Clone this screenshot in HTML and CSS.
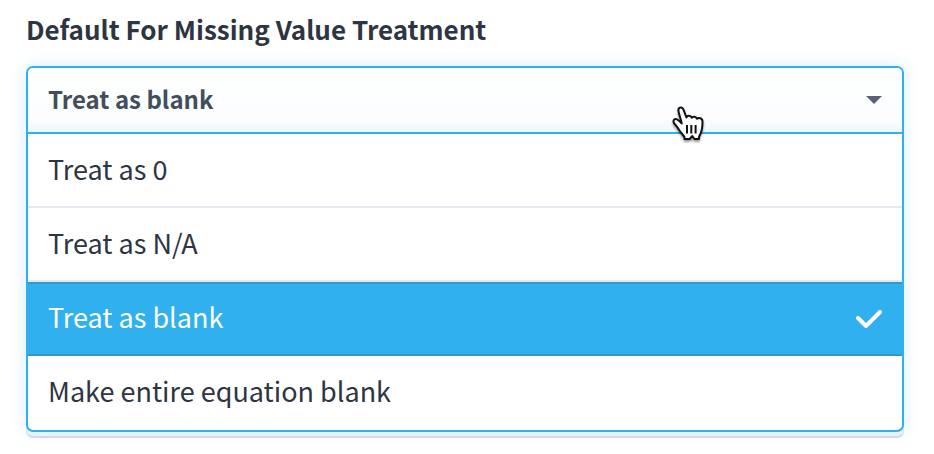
FILE: index.html
```
<!DOCTYPE html>
<html lang="en">
<head>
    <meta charset="UTF-8">
    <meta name="viewport" content="width=device-width, initial-scale=1.0">
    <title>Missing Value Treatment</title>
    <link rel="stylesheet" href="styles.css">
</head>
<body>

    <div class="field">
        <label class="field-label" for="missingValue">Default For Missing Value Treatment</label>

        <div class="dropdown">
            <!-- Closed control -->
            <div class="dropdown-control">
                <select id="missingValue" class="dropdown-select">
                    <option>Treat as 0</option>
                    <option>Treat as N/A</option>
                    <option selected>Treat as blank</option>
                    <option>Make entire equation blank</option>
                </select>
                <svg class="caret" viewBox="0 0 16 8" aria-hidden="true"><path d="M0 0h16L8 8z"/></svg>

                <!-- Hand pointer -->
                <svg class="pointer" viewBox="0 0 40 42" aria-hidden="true">
                    <path d="M14.500 36v-2c-1.500-2.300-3.700-4.200-5-6.500-1.400-2.300-2.800-4.600-4.800-6.500-1.600-1.700-1.700-4 .1-4.800 2.200-.9 4.300 1.400 6.900 4.200-.8-4.500-2.600-8.500-3.200-12.300-.6-4.100 3.800-5 5.100-1.300l2.800 7.700c.6-2.300 4.500-2.300 5.300.3.900-1.700 4.700-1.500 5.300 1 1.500-1.500 5.500-.7 5.500 2.700 0 4.500-.5 8.500-1.700 11.500-.9 2.200-1.800 2.700-1.800 4.500v1.500h-4.500l-2.200-3-2.600 3z"/>
                    <path class="pointer-lines" d="M17 22v8.500M21.300 22v8.500M25.600 22v8.500"/>
                </svg>
            </div>

            <!-- Open menu -->
            <div class="dropdown-menu">
                <button type="button" class="dropdown-item">Treat as 0</button>
                <button type="button" class="dropdown-item">Treat as N/A</button>
                <button type="button" class="dropdown-item selected">
                    Treat as blank
                    <svg class="check" viewBox="0 0 26 18" aria-hidden="true"><path d="M2 8l8 8L24 2"/></svg>
                </button>
                <button type="button" class="dropdown-item">Make entire equation blank</button>
            </div>
        </div>
    </div>

</body>
</html>
```

FILE: styles.css
```
body {
    font-family: "Noto Sans CJK SC", "Noto Sans", sans-serif;
    margin: 0;
    background: #fff;
    color: #2d3542;
}

.field {
    padding: 10px 30px 16px 26px;
}

.field-label {
    display: block;
    margin-bottom: 18px;
    font-size: 26px;
    font-weight: 700;
    line-height: 38px;
}

/* Frame around the control and its menu */
.dropdown {
    border: 2px solid #30b0ee;
    border-radius: 7px;
    background: #fff;
    box-shadow: 0 4px 0 #e9f1f9, 0 6px 0 #d0dbe5, 0 0 16px rgba(48, 176, 238, 0.2);
}

.dropdown-control {
    position: relative;
    display: flex;
    align-items: center;
    height: 64px;
    border-bottom: 2px solid #30b0ee;
    border-radius: 5px 5px 0 0;
    background: linear-gradient(#fff, #fbfdfe 80%, #edf6fd);
}

.dropdown-select {
    flex: 1;
    height: 64px;
    padding: 0 20px 4px;
    border: none;
    outline: none;
    appearance: none;
    background: transparent;
    color: #434e5b;
    font-family: inherit;
    font-size: 24px;
    font-weight: 700;
    cursor: pointer;
}

.caret {
    position: absolute;
    right: 20px;
    width: 16px;
    height: 8px;
    fill: #5b6275;
    pointer-events: none;
}

.pointer {
    position: absolute;
    top: 35px;
    right: 192px;
    width: 40px;
    height: 42px;
    fill: #fff;
    stroke: #111;
    stroke-width: 2;
    stroke-linejoin: round;
    filter: drop-shadow(0 2px 1px rgba(0, 0, 0, 0.4));
    pointer-events: none;
}

.pointer-lines {
    fill: none;
}

/* Menu rows */
.dropdown-menu {
    display: flex;
    flex-direction: column;
}

.dropdown-item {
    display: flex;
    justify-content: space-between;
    align-items: center;
    height: 74px;
    padding: 0 20px 4px;
    border: none;
    border-bottom: 2px solid #e6eaf0;
    background: none;
    color: #2d3542;
    font-family: inherit;
    font-size: 27px;
    text-align: left;
    cursor: pointer;
}

.dropdown-item:last-child {
    border-bottom-color: transparent;
}

.dropdown-item.selected {
    border-bottom-color: #3298c9;
    background: #30b0ee;
    box-shadow: inset 0 2px 0 #3298c9;
    color: #fff;
}

.check {
    width: 26px;
    height: 18px;
    margin-top: 6px;
    fill: none;
    stroke: #fff;
    stroke-width: 4;
    stroke-linecap: round;
    stroke-linejoin: round;
}
```
